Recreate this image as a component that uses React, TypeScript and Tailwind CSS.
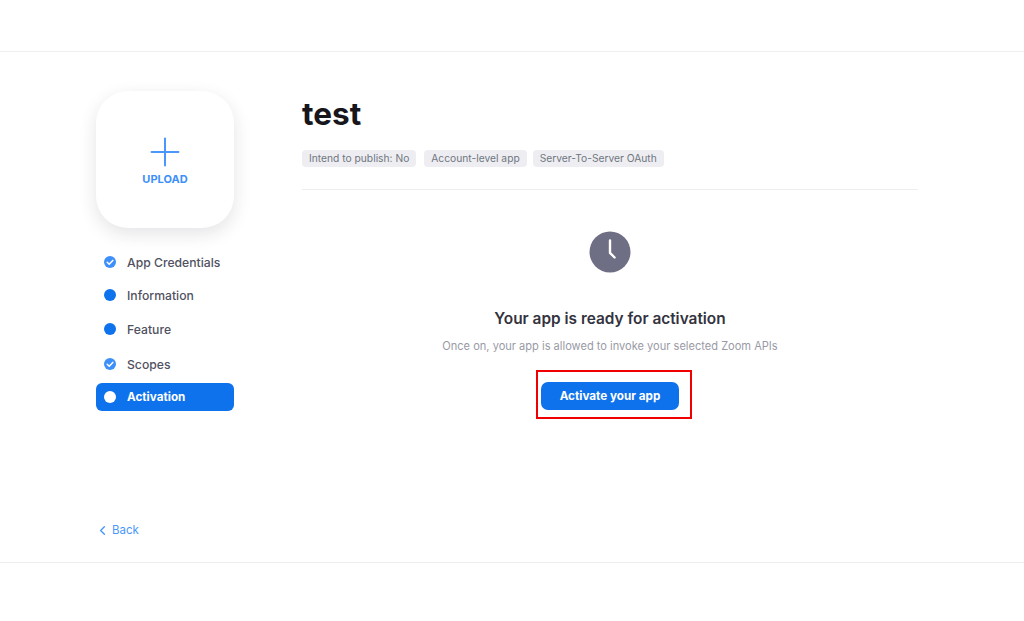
import { ChevronLeft, Plus } from "lucide-react"

const steps = [
  { label: "App Credentials", state: "done", gap: "mt-0" },
  { label: "Information", state: "todo", gap: "mt-[5px]" },
  { label: "Feature", state: "todo", gap: "mt-[6px]" },
  { label: "Scopes", state: "done", gap: "mt-[7px]" },
  { label: "Activation", state: "active", gap: "mt-[4px] pb-0 pt-px" },
]

const tags = [
  { label: "Intend to publish: No", gap: "mr-[8px]" },
  { label: "Account-level app", gap: "mr-[6px]" },
  { label: "Server-To-Server OAuth", gap: "mr-0" },
]

function StepDot({ state }: { state: string }) {
  if (state === "done") {
    return (
      <svg width="14" height="14" viewBox="0 0 14 14" className="shrink-0 -translate-y-px">
        <circle cx="7" cy="7" r="6" fill="#3d8ffa" />
        <path d="M4.2 7.2l2 2 3.6-3.8" fill="none" stroke="#fff" strokeWidth="1.5" strokeLinecap="round" strokeLinejoin="round" />
      </svg>
    )
  }
  return <span className={`ml-px mr-px h-3 w-3 shrink-0 -translate-y-px rounded-full ${state === "active" ? "bg-white" : "bg-[#0e72ed]"}`} />
}

export default function App() {
  return (
    <div className="flex h-[621px] w-full flex-col overflow-hidden bg-white font-['Inter',sans-serif]">
      <div className="h-[52px] shrink-0 border-b border-[#f0f0f2]" />
      <div className="flex h-[511px] shrink-0 border-b border-[#ededf0]">
        <aside className="ml-[96px] flex w-[138px] shrink-0 flex-col pt-[39px]">
          <button className="flex h-[137px] w-[138px] shrink-0 flex-col items-center justify-center rounded-[32px] bg-white pt-[2px] shadow-[0_6px_18px_rgba(30,35,60,0.12)]">
            <Plus size={46} strokeWidth={1.05} className="-my-[6px] text-[#4a97fb]" />
            <span className="mt-[3px] text-[11px] leading-[14px] font-bold text-[#3d8ffa]">UPLOAD</span>
          </button>
          <nav className="mt-[21px] flex flex-col">
            {steps.map((step) => (
              <div
                key={step.label}
                className={`flex h-[28px] items-center gap-[10px] rounded-[6px] pl-[7px] ${step.gap} ${
                  step.state === "active" ? "bg-[#0e72ed] text-[11.7px] font-bold text-white" : "text-[12.2px] font-medium text-[#51515f]"
                }`}
              >
                <StepDot state={step.state} />
                {step.label}
              </div>
            ))}
          </nav>
          <a className="mt-auto mb-[24px] flex items-center gap-[1px] text-[11.5px] leading-[16px] text-[#4a97fb]">
            <ChevronLeft size={15} strokeWidth={2.2} className="-ml-[1px]" />
            <span className="ml-[1px]">Back</span>
          </a>
        </aside>
        <main className="ml-[68px] w-[616px] shrink-0">
          <h1 className="mt-[44px] text-[31.5px] leading-[36px] font-bold text-[#16161c]">test</h1>
          <div className="mt-[18px] flex border-b border-[#ededf0] pb-[22px]">
            {tags.map((tag) => (
              <span
                key={tag.label}
                className={`flex h-[17px] items-center rounded-[4px] bg-[#eeeef2] px-[7px] text-[10.25px] text-[#6e7680] ${tag.gap}`}
              >
                {tag.label}
              </span>
            ))}
          </div>
          <div className="flex flex-col items-center pt-[41px]">
            <svg width="42" height="42" viewBox="0 0 42 42">
              <circle cx="21" cy="21" r="20.5" fill="#6e6e84" />
              <path d="M21 9.5v12.4l4.6 4.6" fill="none" stroke="#fff" strokeWidth="2.4" strokeLinecap="round" strokeLinejoin="round" />
            </svg>
            <h2 className="mt-[35px] text-[15.4px] leading-[22px] font-semibold text-[#33333d]">Your app is ready for activation</h2>
            <p className="mt-[8px] text-[11.07px] leading-[16px] text-[#9a9aa6]">Once on, your app is allowed to invoke your selected Zoom APIs</p>
            <div className="relative mt-[28px]">
              <button className="flex h-[28px] w-[138px] items-center justify-center rounded-[7px] bg-[#0e72ed] pt-[2px] text-[11.7px] font-bold text-white">
                Activate your app
              </button>
              {/* red annotation box from the original screenshot */}
              <div className="absolute -top-[12px] -right-[13px] -bottom-[9px] -left-[5px] border-2 border-[#f00000]" />
            </div>
          </div>
        </main>
      </div>
    </div>
  )
}
